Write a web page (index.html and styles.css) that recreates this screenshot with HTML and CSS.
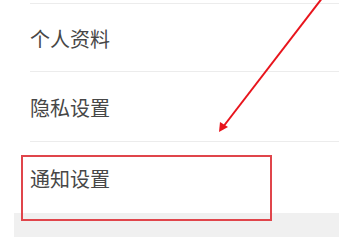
FILE: index.html
```html
<!DOCTYPE html>
<html lang="zh-CN">
<head>
    <meta charset="UTF-8">
    <meta name="viewport" content="width=device-width, initial-scale=1.0">
    <title>设置</title>
    <link rel="stylesheet" href="styles.css">
</head>
<body>
    <div class="screen">
        <ul class="menu">
            <li class="menu-item">个人资料</li>
            <li class="menu-item">隐私设置</li>
            <li class="menu-item last">通知设置</li>
        </ul>
    </div>

    <!-- annotation overlay -->
    <div class="mark-box"></div>
    <svg class="mark-arrow" width="339" height="237" viewBox="0 0 339 237">
        <line x1="323" y1="-3" x2="223" y2="127" stroke="#e8141c" stroke-width="2" />
        <polygon points="219,132 220,122 228,127" fill="#e8141c" />
    </svg>
</body>
</html>
```

FILE: styles.css
```css
body {
    margin: 0;
    background-color: #fff;
    font-family: "Noto Sans CJK SC", "Noto Sans", sans-serif;
    overflow: hidden;
}
.screen {
    margin-left: 14px;
    background-color: #f0f0f0;
    height: 237px;
    overflow: hidden;
}
.menu {
    list-style: none;
    margin: 0 0 0 -14px;
    padding: 3px 0 0 14px;
    background-color: #fff;
}
.menu-item {
    height: 70px;
    box-sizing: border-box;
    margin-left: 16px;
    border-bottom: 1px solid #ececec;
    display: flex;
    align-items: center;
    padding-top: 2px;
    font-size: 20px;
    color: #474747;
}
.menu-item:first-child {
    border-top: 1px solid #ececec;
    height: 69px;
}
.menu-item.last {
    border-bottom: none;
    height: 71px;
}
.mark-box {
    position: absolute;
    left: 21px;
    top: 155px;
    width: 251px;
    height: 66px;
    box-sizing: border-box;
    border: 2px solid #e0454b;
}
.mark-arrow {
    position: absolute;
    left: 0;
    top: 0;
}
```
